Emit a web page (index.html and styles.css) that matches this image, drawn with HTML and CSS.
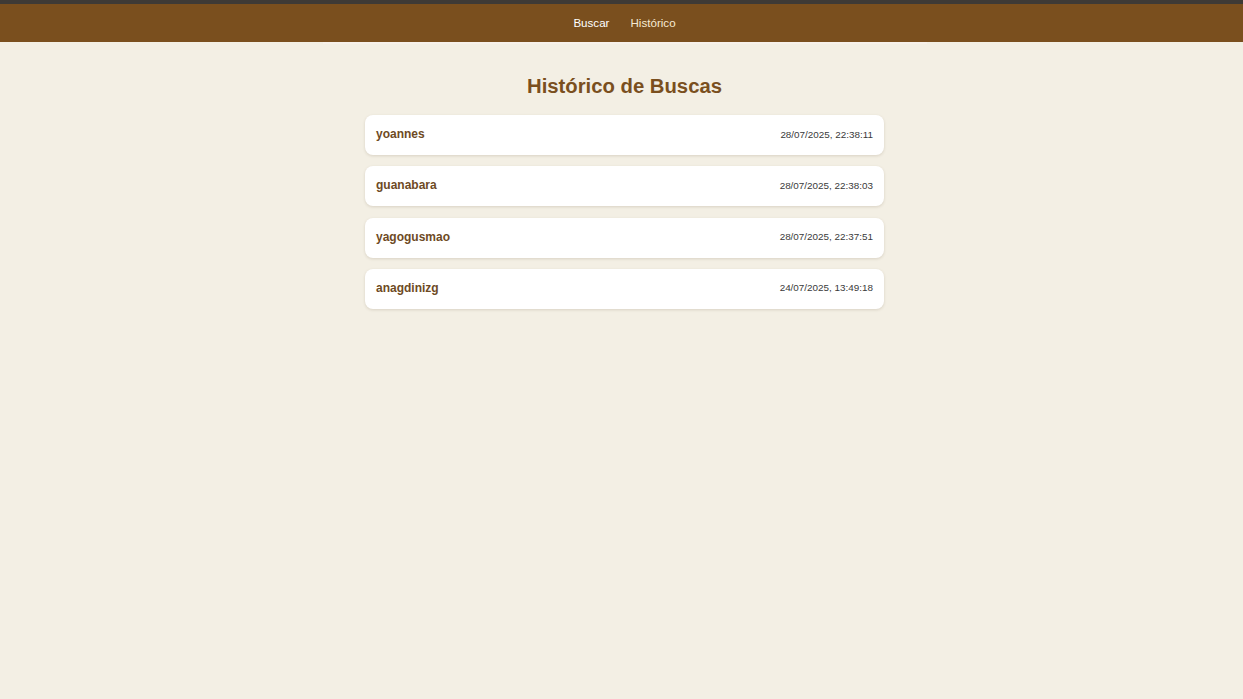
FILE: index.html
```html
<!DOCTYPE html>
<html lang="pt-BR">
<head>
<meta charset="utf-8">
<title>Histórico de Buscas</title>
<link rel="stylesheet" href="styles.css">
</head>
<body>
<header class="topbar">
  <nav class="nav">
    <a class="nav-link" href="#">Buscar</a>
    <a class="nav-link active" href="#">Histórico</a>
  </nav>
</header>
<main class="main">
  <h2 class="title">Histórico de Buscas</h2>
  <ul class="list">
    <li class="card"><span class="name">yoannes</span><span class="date">28/07/2025, 22:38:11</span></li>
    <li class="card"><span class="name">guanabara</span><span class="date">28/07/2025, 22:38:03</span></li>
    <li class="card"><span class="name">yagogusmao</span><span class="date">28/07/2025, 22:37:51</span></li>
    <li class="card"><span class="name">anagdinizg</span><span class="date">24/07/2025, 13:49:18</span></li>
  </ul>
</main>
</body>
</html>
```

FILE: styles.css
```css
html, body {
  margin: 0;
  padding: 0;
}
body {
  background: #f3efe4;
  font-family: "Liberation Sans", Arial, sans-serif;
  min-height: 699px;
}
.topbar {
  background: #7a4f1e;
  border-top: 4px solid #3e3a36;
  height: 38px;
  display: flex;
  align-items: center;
  justify-content: center;
  padding-left: 6px;
}
.nav {
  display: flex;
  gap: 21px;
}
.nav-link {
  color: #ffffff;
  text-decoration: none;
  font-size: 11.6px;
  line-height: 14px;
}
.nav-link.active {
  color: #f6ead2;
}
.main {
  width: 604px;
  margin: 0 auto;
  position: relative;
  left: 3px;
  border-top: 2px solid #f7f1ea;
  padding-top: 30px;
  display: flex;
  flex-direction: column;
  align-items: center;
}
.title {
  margin: 0 0 17px;
  font-size: 20.3px;
  line-height: 24px;
  font-weight: bold;
  color: #7a4f1e;
  text-align: center;
}
.list {
  list-style: none;
  margin: 0;
  padding: 0;
  width: 519px;
  display: flex;
  flex-direction: column;
  gap: 11.33px;
}
.card {
  background: #ffffff;
  border-radius: 8px;
  height: 40px;
  padding: 0 11px 2px;
  box-sizing: border-box;
  display: flex;
  align-items: center;
  justify-content: space-between;
  box-shadow: 0 1px 3px rgba(80, 60, 30, 0.16);
}
.name {
  font-size: 12px;
  font-weight: bold;
  color: #6e4a24;
}
.date {
  font-size: 9.9px;
  color: #3a3a3a;
}
```
